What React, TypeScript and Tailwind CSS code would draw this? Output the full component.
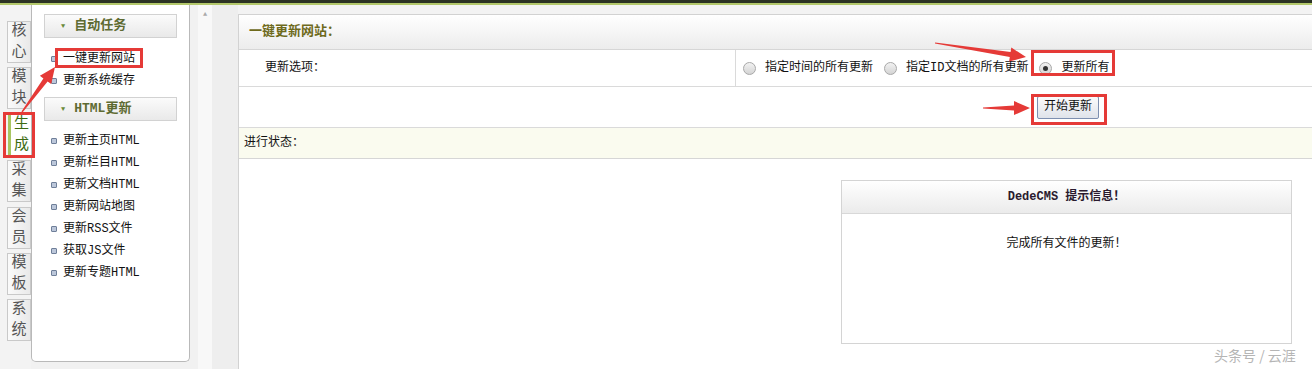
import React from 'react';

const font = { fontFamily: '"Liberation Mono", "Noto Sans CJK SC", monospace' };

const tabs = [
  { label: ['核', '心'], active: false },
  { label: ['模', '块'], active: false },
  { label: ['生', '成'], active: true },
  { label: ['采', '集'], active: false },
  { label: ['会', '员'], active: false },
  { label: ['模', '板'], active: false },
  { label: ['系', '统'], active: false },
];

const autoTasks = ['一键更新网站', '更新系统缓存'];
const htmlTasks = ['更新主页HTML', '更新栏目HTML', '更新文档HTML', '更新网站地图', '更新RSS文件', '获取JS文件', '更新专题HTML'];

// tapered arrow polygon from tail to head
function arrowPoints(x1: number, y1: number, x2: number, y2: number) {
  const dx = x2 - x1;
  const dy = y2 - y1;
  const len = Math.hypot(dx, dy);
  const ux = dx / len;
  const uy = dy / len;
  const px = -uy;
  const py = ux;
  const headLen = 16;
  const headW = 7;
  const shaftW = 2.6;
  const bx = x2 - ux * headLen;
  const by = y2 - uy * headLen;
  const pts = [
    [x1 + px * 0.6, y1 + py * 0.6],
    [bx + px * shaftW, by + py * shaftW],
    [bx + px * headW, by + py * headW],
    [x2, y2],
    [bx - px * headW, by - py * headW],
    [bx - px * shaftW, by - py * shaftW],
    [x1 - px * 0.6, y1 - py * 0.6],
  ];
  return pts.map(p => `${p[0].toFixed(1)},${p[1].toFixed(1)}`).join(' ');
}

const MenuHeader: React.FC<{ title: string }> = ({ title }) => (
  <div className="mx-[12px] h-[24px] border border-[#d2d2d2] bg-gradient-to-b from-[#fbfbfb] to-[#e9e9e9] flex items-center">
    <span className="ml-[16px] text-[#6a8a3a] text-[7px] leading-none">▼</span>
    <span className="ml-[9px] text-[13px] font-bold text-[#5e6b32]">{title}</span>
  </div>
);

const MenuItem: React.FC<{ text: string }> = ({ text }) => (
  <div className="h-[22px] flex items-center pl-[19px]">
    <span className="w-[6px] h-[6px] border border-[#6f7f99] bg-[#bcc7da] rounded-[1px]" />
    <span className="ml-[6px] text-[12px] text-[#111]">{text}</span>
  </div>
);

const Radio: React.FC<{ checked?: boolean; label: string }> = ({ checked, label }) => (
  <div className="flex items-center">
    <span className="w-[13px] h-[13px] rounded-full border border-[#a8a8a8] bg-gradient-to-b from-[#f2f2f2] to-[#d4d4d4] flex items-center justify-center">
      {checked && <span className="w-[5px] h-[5px] rounded-full bg-[#333]" />}
    </span>
    <span className="ml-[9px] text-[12px] text-[#111]">{label}</span>
  </div>
);

export default function App() {
  return (
    <div className="relative w-[1312px] h-[369px] overflow-hidden bg-[#f1f1f1]" style={font}>
      {/* top bar */}
      <div className="h-[3px] bg-[#2c3324]" />
      <div className="h-[2px] bg-[#b3c86b]" />

      <div className="flex h-[364px]">
        {/* vertical tabs */}
        <div className="w-[31px] pt-[16px] flex flex-col gap-[4.4px] items-end bg-[#f3f3f3]">
          {tabs.map(t => (
            <div
              key={t.label.join('')}
              className={
                t.active
                  ? 'w-[24px] h-[42px] bg-white border-y border-[#c9c9c9] border-l-[3px] border-l-[#a8c561] flex flex-col items-center justify-center text-[15px] leading-[21px] text-[#3d6b12] -mr-px'
                  : 'w-[24px] h-[42px] bg-gradient-to-r from-[#fafafa] to-[#e9e9e9] border border-[#c9c9c9] flex flex-col items-center justify-center text-[15px] leading-[21px] text-[#555]'
              }
            >
              <span>{t.label[0]}</span>
              <span>{t.label[1]}</span>
            </div>
          ))}
        </div>

        {/* menu panel */}
        <div className="w-[159px] h-[357px] bg-white border-x border-b border-[#b9b9b9] rounded-b-[5px] pt-[9px]">
          <MenuHeader title="自动任务" />
          <div className="mt-[10px]">
            {autoTasks.map(t => <MenuItem key={t} text={t} />)}
          </div>
          <div className="mt-[5px]">
            <MenuHeader title="HTML更新" />
          </div>
          <div className="mt-[9px]">
            {htmlTasks.map(t => <MenuItem key={t} text={t} />)}
          </div>
        </div>

        {/* gutter with scroll strip */}
        <div className="w-[48px] flex">
          <div className="w-[8px]" />
          <div className="w-[14px] bg-[#f8f8f8] flex justify-center pt-[6px]">
            <span className="text-[7px] leading-none text-[#aaa]">▲</span>
          </div>
          <div className="flex-1 bg-[#eeeeee]" />
        </div>

        {/* main content */}
        <div className="flex-1 pt-[9px] bg-[#f3f3f3]">
          <div className="h-full bg-white border-l border-t border-[#d2d2d2]">
            <div className="h-[35px] bg-gradient-to-b from-white to-[#ececec] border-b border-[#d6d6d6] flex items-center pl-[10px]">
              <span className="text-[13px] font-bold text-[#6e6a1c]">一键更新网站：</span>
            </div>
            <div className="h-[37px] border-b border-[#dadada] flex">
              <div className="w-[497px] border-r border-[#dadada] flex items-center pl-[26px] text-[12px] text-[#111]">更新选项：</div>
              <div className="flex items-center pl-[7px] gap-[11px]">
                <Radio label="指定时间的所有更新" />
                <Radio label="指定ID文档的所有更新" />
                <Radio checked label="更新所有" />
              </div>
            </div>
            <div className="h-[41px] border-b border-[#dadada] flex items-center pl-[798px]">
              <button className="h-[23px] px-[6px] border border-[#7d8fb0] rounded-[2px] bg-gradient-to-b from-[#fbfbfb] to-[#dfe3ea] text-[12px] text-[#111]">开始更新</button>
            </div>
            <div className="h-[31px] bg-[#fafbef] border-b border-[#d6d6d6] flex items-center pl-[5px] text-[12px] text-[#111]">进行状态：</div>
            <div className="pl-[602px] pt-[21px]">
              <div className="w-[451px] h-[164px] border border-[#d4d4d4] flex flex-col">
                <div className="h-[33px] bg-gradient-to-b from-white to-[#ebebeb] border-b border-[#d8d8d8] flex items-center justify-center">
                  <span className="text-[12px] font-bold text-[#2a1a2e]">DedeCMS 提示信息！</span>
                </div>
                <div className="pt-[21px] text-center text-[12px] text-[#111]">完成所有文件的更新！</div>
              </div>
            </div>
          </div>
        </div>
      </div>

      {/* watermark */}
      <div className="absolute left-[1214px] top-[345px] text-[14px] text-[#b5b5b5]" style={{ fontFamily: '"Noto Sans CJK SC", sans-serif' }}>头条号 / 云涯</div>

      {/* red annotations */}
      <div className="absolute left-[3px] top-[112px] w-[32px] h-[46px] border-[3px] border-[#e53a37]" />
      <div className="absolute left-[55px] top-[48px] w-[88px] h-[20px] border-[3px] border-[#e53a37]" />
      <div className="absolute left-[1031px] top-[50px] w-[84px] h-[26px] border-[3px] border-[#e53a37]" />
      <div className="absolute left-[1031px] top-[94px] w-[76px] h-[31px] border-[3px] border-[#e53a37]" />
      <svg className="absolute left-0 top-0" width="1312" height="369">
        <polygon points={arrowPoints(22, 112, 55, 67)} fill="#e53a37" />
        <polygon points={arrowPoints(935, 43, 1026, 57)} fill="#e53a37" />
        <polygon points={arrowPoints(983, 108, 1030, 108)} fill="#e53a37" />
      </svg>
    </div>
  );
}
